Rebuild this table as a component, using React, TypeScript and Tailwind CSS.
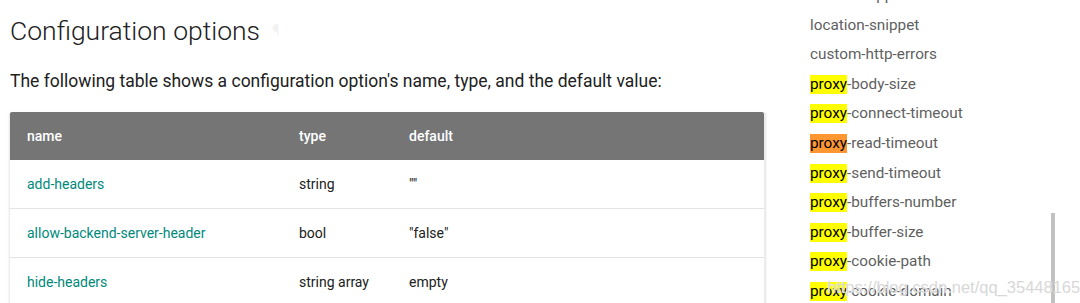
import React from 'react';

const rows = [
  { name: 'add-headers', type: 'string', def: '""' },
  { name: 'allow-backend-server-header', type: 'bool', def: '"false"' },
  { name: 'hide-headers', type: 'string array', def: 'empty' },
];

const toc: { hl?: 'y' | 'o'; rest: string }[] = [
  { rest: 'server-snippet' },
  { rest: 'location-snippet' },
  { rest: 'custom-http-errors' },
  { hl: 'y', rest: '-body-size' },
  { hl: 'y', rest: '-connect-timeout' },
  { hl: 'o', rest: '-read-timeout' },
  { hl: 'y', rest: '-send-timeout' },
  { hl: 'y', rest: '-buffers-number' },
  { hl: 'y', rest: '-buffer-size' },
  { hl: 'y', rest: '-cookie-path' },
  { hl: 'y', rest: '-cookie-domain' },
];

export default function App() {
  return (
    <div className="relative w-[1080px] h-[303px] overflow-hidden bg-white font-['Roboto','Liberation_Sans',sans-serif]">
      <div className="flex">
        {/* Main content */}
        <div className="w-[767px] pl-[9px]">
          <h2 className="flex items-center h-[30px] mt-[16px] pl-px text-[26.5px] font-light text-[#212121]">
            Configuration options
            <span className="ml-3 text-[16px] text-[#f2f2f2]">¶</span>
          </h2>
          <p className="mt-[24px] pl-px text-[17.5px] leading-[22px] text-[#212121]">
            The following table shows a configuration option's name, type, and the default value:
          </p>
          <div className="mt-[20px] w-[757px] rounded-t-[2px] border-r-2 border-l border-[#ececec] shadow-[0_1px_2px_rgba(0,0,0,0.12)]">
            <div className="flex h-12 items-center bg-[#757575] text-[14px] font-medium text-white rounded-t-[2px]">
              <div className="w-[289px] pl-[17px]">name</div>
              <div className="w-[110px]">type</div>
              <div>default</div>
            </div>
            {rows.map((r) => (
              <div key={r.name} className="flex h-[49px] items-center border-b border-[#e4e4e4] text-[14px]">
                <div className="w-[289px] pl-[17px] text-[#00897b]">{r.name}</div>
                <div className="w-[110px] text-[#212121]">{r.type}</div>
                <div className="text-[#212121]">{r.def}</div>
              </div>
            ))}
          </div>
        </div>

        {/* Table of contents */}
        <div className="ml-[43px] mt-[-19px] text-[15.3px] text-[#5f5f5f]">
          {toc.map((t, i) => (
            <div key={i} className="flex items-center h-[29.55px]">
              {t.hl && (
                <span className={`${t.hl === 'o' ? 'bg-[#ff9632]' : 'bg-[#ffff00]'} text-black leading-[19px]`}>proxy</span>
              )}
              <span>{t.rest}</span>
            </div>
          ))}
        </div>
      </div>

      {/* scrollbar thumb */}
      <div className="absolute left-[1051px] top-[213px] w-[4px] h-[95px] bg-[#c1c1c1]" />

      {/* watermark */}
      <div className="absolute left-[827px] top-[275px] text-[16.5px] text-[#d8d8d8] font-['Liberation_Sans',sans-serif] [text-shadow:0_0_1px_#fff] pointer-events-none">
        https://blog.csdn.net/qq_35448165
      </div>
    </div>
  );
}
